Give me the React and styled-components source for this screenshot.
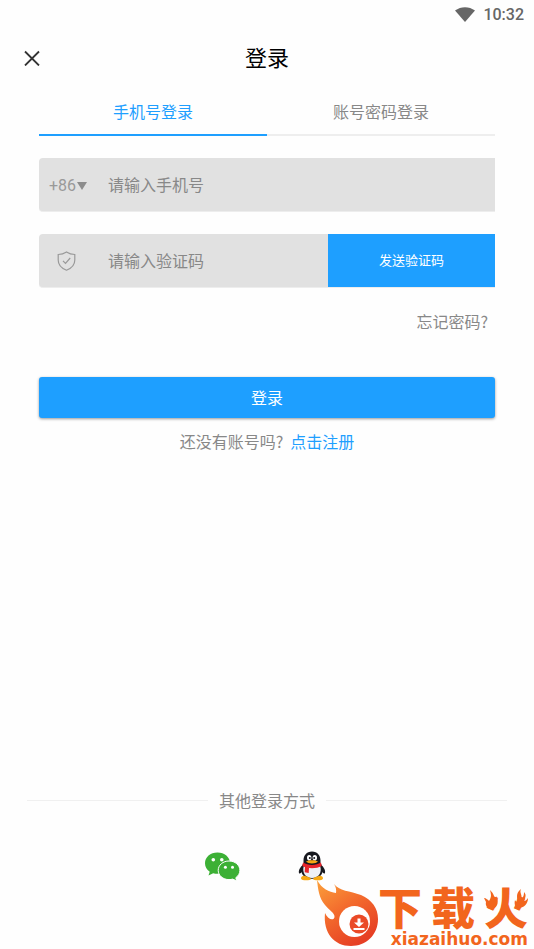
import React, { useState } from 'react';
import styled, { createGlobalStyle } from 'styled-components';

const GlobalStyle = createGlobalStyle`
    * {
        box-sizing: border-box;
    }

    body {
        margin: 0;
        background: #fefefe;
        font-family: "Noto Sans CJK SC", sans-serif;
        font-size: 16px;
        line-height: 22px;
        color: #888;
    }

    button, input, select {
        font: inherit;
        color: inherit;
        border: none;
        padding: 0;
        margin: 0;
        background: transparent;
    }

    button, select {
        cursor: pointer;
    }
`;

const Container = styled.div`
    position: relative;
    min-height: 100vh;
    display: flex;
    flex-direction: column;
    overflow: hidden;
`;

const StatusBar = styled.div`
    height: 28px;
    padding: 2px 10px 0;
    display: flex;
    align-items: center;
    justify-content: flex-end;
    gap: 8px;
    font-family: Roboto, sans-serif;
    font-weight: 500;
    color: #666;
`;

const Header = styled.header`
    height: 60px;
    padding: 0 20px;
    display: grid;
    grid-template-columns: 24px 1fr 24px;
    align-items: center;
`;

const CloseButton = styled.button`
    width: 24px;
    height: 24px;
    display: flex;
    align-items: center;
    justify-content: center;
`;

const Title = styled.h1`
    margin: 0;
    padding-bottom: 4px;
    font-size: 22px;
    line-height: 32px;
    font-weight: 400;
    text-align: center;
    color: #000;
`;

const Tabs = styled.div`
    margin: 0 39px;
    display: flex;
`;

const Tab = styled.button`
    flex: 1;
    height: 48px;
    color: ${(props) => (props.$active ? '#1e9fff' : '#888')};
    border-bottom: 2px solid ${(props) => (props.$active ? '#1e9fff' : '#eee')};
`;

const Form = styled.form`
    padding: 22px 39px 0;
    display: flex;
    flex-direction: column;
`;

const Field = styled.div`
    height: 54px;
    margin-bottom: 22px;
    display: flex;
    align-items: stretch;
    background-color: #e1e1e1;
    border-bottom: 1px solid #ededed;
    border-radius: 4px 0 0 4px;
    overflow: hidden;
`;

const Prefix = styled.label`
    flex: 0 0 69px;
    padding-left: ${(props) => (props.$icon ? '18px' : '10px')};
    display: flex;
    align-items: center;
    color: #999;
`;

const AreaSelect = styled.select`
    width: 28px;
    padding-top: 2px;
    font-family: Roboto, sans-serif;
    appearance: none;
    outline: none;
`;

const Input = styled.input`
    flex: 1;
    min-width: 0;
    padding-bottom: 2px;
    outline: none;

    &::placeholder {
        color: #888;
        opacity: 1;
    }
`;

const SendButton = styled.button`
    flex: 0 0 167px;
    padding-bottom: 2px;
    font-size: 13px;
    color: #fff;
    background-color: #1e9fff;
`;

const ForgotLink = styled.a`
    align-self: flex-end;
    padding-right: 7px;
    color: #888;
    text-decoration: none;
`;

const LoginButton = styled.button`
    height: 41px;
    margin-top: 45px;
    padding-bottom: 2px;
    color: #fff;
    background-color: #1e9fff;
    border-radius: 3px;
    box-shadow: 0 1px 3px rgba(0, 0, 0, 0.4);
`;

const Register = styled.p`
    margin: 12px 0 0;
    text-align: center;
`;

const RegisterLink = styled.a`
    margin-left: 7px;
    color: #1e9fff;
    text-decoration: none;
`;

const Others = styled.section`
    margin-top: auto;
    padding: 0 27px 66px;
`;

const Divider = styled.div`
    display: flex;
    align-items: center;
    gap: 11px;

    &::before,
    &::after {
        content: "";
        flex: 1;
        height: 1px;
        background-color: #f0f0f0;
    }
`;

const Socials = styled.div`
    margin-top: 38px;
    display: flex;
    justify-content: center;
    gap: 54px;
`;

const SocialButton = styled.button`
    width: 36px;
    height: 34px;
    display: flex;
    align-items: center;
    justify-content: center;
`;

// site mark that floats over the bottom corner
const Watermark = styled.div`
    position: absolute;
    right: 6px;
    bottom: 2px;
    display: flex;
    align-items: flex-end;
    pointer-events: none;
`;

const MarkText = styled.div`
    width: 150px;
    display: flex;
    flex-direction: column;
    gap: 6px;
    color: #f2651d;
`;

const MarkName = styled.div`
    display: flex;
    justify-content: space-between;
    font-size: 44px;
    line-height: 40px;
    font-weight: 900;
`;

const FlameChar = styled.span`
    position: relative;

    svg {
        position: absolute;
        top: 2px;
        left: 0;
    }
`;

const MarkSite = styled.span`
    font-family: "DejaVu Sans", sans-serif;
    font-size: 17px;
    line-height: 15px;
    font-weight: 700;
    text-align: right;
`;

const WifiIcon = () => (
  <svg width="20" height="16" viewBox="0 0 20 16" aria-hidden="true">
    <path d="M0 3.5 C6 -1 14 -1 20 3.5 L10 15 Z" fill="#666" />
  </svg>
);

const CloseIcon = () => (
  <svg width="16" height="16" viewBox="0 0 16 16" aria-hidden="true">
    <path d="M1 1.5 L15 15.5 M15 1.5 L1 15.5" stroke="#333" strokeWidth="1.8" fill="none" />
  </svg>
);

const ArrowIcon = () => (
  <svg width="10" height="10" viewBox="0 0 10 10" aria-hidden="true">
    <path d="M0 2 H10 L5 10 Z" fill="#8c8c8c" />
  </svg>
);

const ShieldIcon = () => (
  <svg width="19" height="20" viewBox="0 0 19 20" fill="none" stroke="#999" strokeWidth="1.2" aria-hidden="true">
    <path d="M9.5 1 C7 2.7 4 3.5 1.2 3.5 V9 C1.2 14 4.5 17.3 9.5 19.2 C14.5 17.3 17.8 14 17.8 9 V3.5 C15 3.5 12 2.7 9.5 1 Z" />
    <path d="M6 9.8 L8.5 12.3 L13.2 7" />
  </svg>
);

const WechatIcon = () => (
  <svg width="36" height="30" viewBox="0 0 36 30" aria-hidden="true">
    <path d="M13.5 1.5 C6.3 1.5 1 6.2 1 12.3 C1 15.7 2.7 18.7 5.7 20.7 L4.5 24.5 L9.2 22.2 C10.5 22.6 12 22.8 13.5 22.8 C20.5 22.8 26 18.1 26 12.3 C26 6.2 20.5 1.5 13.5 1.5 Z" fill="#3cb035" />
    <circle cx="9.3" cy="8.7" r="1.8" fill="#fff" />
    <circle cx="17.8" cy="8.7" r="1.8" fill="#fff" />
    <path d="M25 10 C19 10 14.2 14.1 14.2 19.3 C14.2 24.5 19 28.6 25 28.6 C26.4 28.6 27.6 28.4 28.7 28.1 L32.7 29.9 L31.8 26.7 C34.3 25 35.9 22.3 35.9 19.3 C35.9 14.1 31 10 25 10 Z" fill="#3cb035" stroke="#fff" strokeWidth="1" />
    <circle cx="21.4" cy="16.3" r="1.5" fill="#fff" />
    <circle cx="28.5" cy="16.3" r="1.5" fill="#fff" />
  </svg>
);

const QqIcon = () => (
  <svg width="28" height="30" viewBox="0 0 28 30" aria-hidden="true">
    <path d="M5 14 C2 16 0 20 1.2 22.4 C2.2 23 3.6 21.5 4.5 19.8 Z M23 14 C26 16 28 20 26.8 22.4 C25.8 23 24.4 21.5 23.5 19.8 Z" fill="#18191f" />
    <path d="M14 0.5 C8.5 0.5 5.5 4.5 5.5 9.5 L5.5 12 C3.5 15 3 17.5 3.4 20.2 C4 25 8.5 27.8 14 27.8 C19.5 27.8 24 25 24.6 20.2 C25 17.5 24.5 15 22.5 12 V9.5 C22.5 4.5 19.5 0.5 14 0.5 Z" fill="#18191f" />
    <path d="M5.8 15 C3.8 21.5 7.5 27 14 27 C20.5 27 24.2 21.5 22.2 15 Z" fill="#eef1f6" />
    <path d="M3 27.5 C3 25 5.5 24.2 8 25.2 C10.5 26 13 26.8 13 28 C13 29.8 3 30 3 27.5 Z M25 27.5 C25 25 22.5 24.2 20 25.2 C17.5 26 15 26.8 15 28 C15 29.8 25 30 25 27.5 Z" fill="#f7a813" />
    <ellipse cx="11.2" cy="6.7" rx="2.2" ry="2.8" fill="#fff" />
    <ellipse cx="16.8" cy="6.7" rx="2.2" ry="2.8" fill="#fff" />
    <circle cx="11.8" cy="7" r="1" fill="#18191f" />
    <circle cx="16.2" cy="7" r="1" fill="#18191f" />
    <path d="M8 10.5 C11 8.8 17 8.8 20 10.5 C18 13 10 13 8 10.5 Z" fill="#f7a813" />
    <path d="M5 11.5 C10 14.7 18 14.7 23 11.5 L23.7 15 C18 18 10 18 4.3 15 Z" fill="#e8252a" />
    <path d="M7 15.5 L11 16.7 L10.7 22 L6.7 21.3 Z" fill="#e8252a" />
  </svg>
);

const FlameLogo = () => (
  <svg width="62" height="68" viewBox="0 0 62 68" aria-hidden="true">
    <defs>
      <linearGradient id="flame" x1="0" y1="0" x2="0.6" y2="1">
        <stop offset="0" stopColor="#fba13b" />
        <stop offset="0.5" stopColor="#f36b2d" />
        <stop offset="1" stopColor="#e63f24" />
      </linearGradient>
    </defs>
    <path d="M1 1 C6 10 13 13 20 14 C20.5 11 20 8 18 5 C23 12 34 12 45 16 C56 21 62 29 62 40 C62 56 50 67 35 67 C18 67 7 54 9 34 C12 41 18 42 18.5 38 C19 34 13 31 9 26 C3 19 2 10 1 1 Z" fill="url(#flame)" />
    <circle cx="38.5" cy="42.5" r="15.5" fill="#fff" />
    <circle cx="43" cy="45" r="9.5" fill="#ea4a27" />
    <path d="M41.5 39.5 H44.5 V43.5 H48 L43 48 L38 43.5 H41.5 Z M37.5 49 H48.5 V51 H37.5 Z" fill="#fff" />
  </svg>
);

const SparkIcon = () => (
  <svg width="44" height="40" viewBox="0 0 44 40" fill="#f2651d" aria-hidden="true">
    <path d="M6 2 C10 6 11 9 10 12 C12 11 12 9 12 8 C15 13 14 19 9 21 C4 22 1 18 2 14 L0 10 C2 10 4 12 5 13 C8 9 7 6 6 2 Z" />
    <path d="M37 1 C35 5 39 7 37 11 C40 9 40 6 40 4 C43 7 41 10 40 13 C42 13 43 11 44 10 C44 16 40 20 34 20 C31 19 30 16 31 12 C32 14 33 14 34 13 C32 8 33 4 37 1 Z" />
  </svg>
);

const App = () => {
  const [mode, setMode] = useState('phone');

  return (
    <Container>
      <GlobalStyle />
      <StatusBar>
        <WifiIcon />
        <span>10:32</span>
      </StatusBar>
      <Header>
        <CloseButton type="button" aria-label="关闭"><CloseIcon /></CloseButton>
        <Title>登录</Title>
      </Header>
      <Tabs role="tablist">
        <Tab type="button" role="tab" aria-selected={mode === 'phone'} $active={mode === 'phone'} onClick={() => setMode('phone')}>手机号登录</Tab>
        <Tab type="button" role="tab" aria-selected={mode === 'account'} $active={mode === 'account'} onClick={() => setMode('account')}>账号密码登录</Tab>
      </Tabs>
      <Form onSubmit={(e) => e.preventDefault()}>
        <Field>
          <Prefix>
            <AreaSelect aria-label="区号" defaultValue="+86">
              <option>+86</option>
            </AreaSelect>
            <ArrowIcon />
          </Prefix>
          <Input type="tel" aria-label="手机号" placeholder="请输入手机号" />
        </Field>
        <Field>
          <Prefix $icon htmlFor="code"><ShieldIcon /></Prefix>
          <Input id="code" type="text" aria-label="验证码" placeholder="请输入验证码" />
          <SendButton type="button">发送验证码</SendButton>
        </Field>
        <ForgotLink href="#forgot">忘记密码?</ForgotLink>
        <LoginButton type="submit">登录</LoginButton>
        <Register>
          还没有账号吗?<RegisterLink href="#register">点击注册</RegisterLink>
        </Register>
      </Form>
      <Others>
        <Divider>其他登录方式</Divider>
        <Socials>
          <SocialButton type="button" aria-label="微信登录"><WechatIcon /></SocialButton>
          <SocialButton type="button" aria-label="QQ登录"><QqIcon /></SocialButton>
        </Socials>
      </Others>
      <Watermark>
        <FlameLogo />
        <MarkText>
          <MarkName>
            <span>下</span>
            <span>载</span>
            <FlameChar>火<SparkIcon /></FlameChar>
          </MarkName>
          <MarkSite>xiazaihuo.com</MarkSite>
        </MarkText>
      </Watermark>
    </Container>
  );
};

export default App;
